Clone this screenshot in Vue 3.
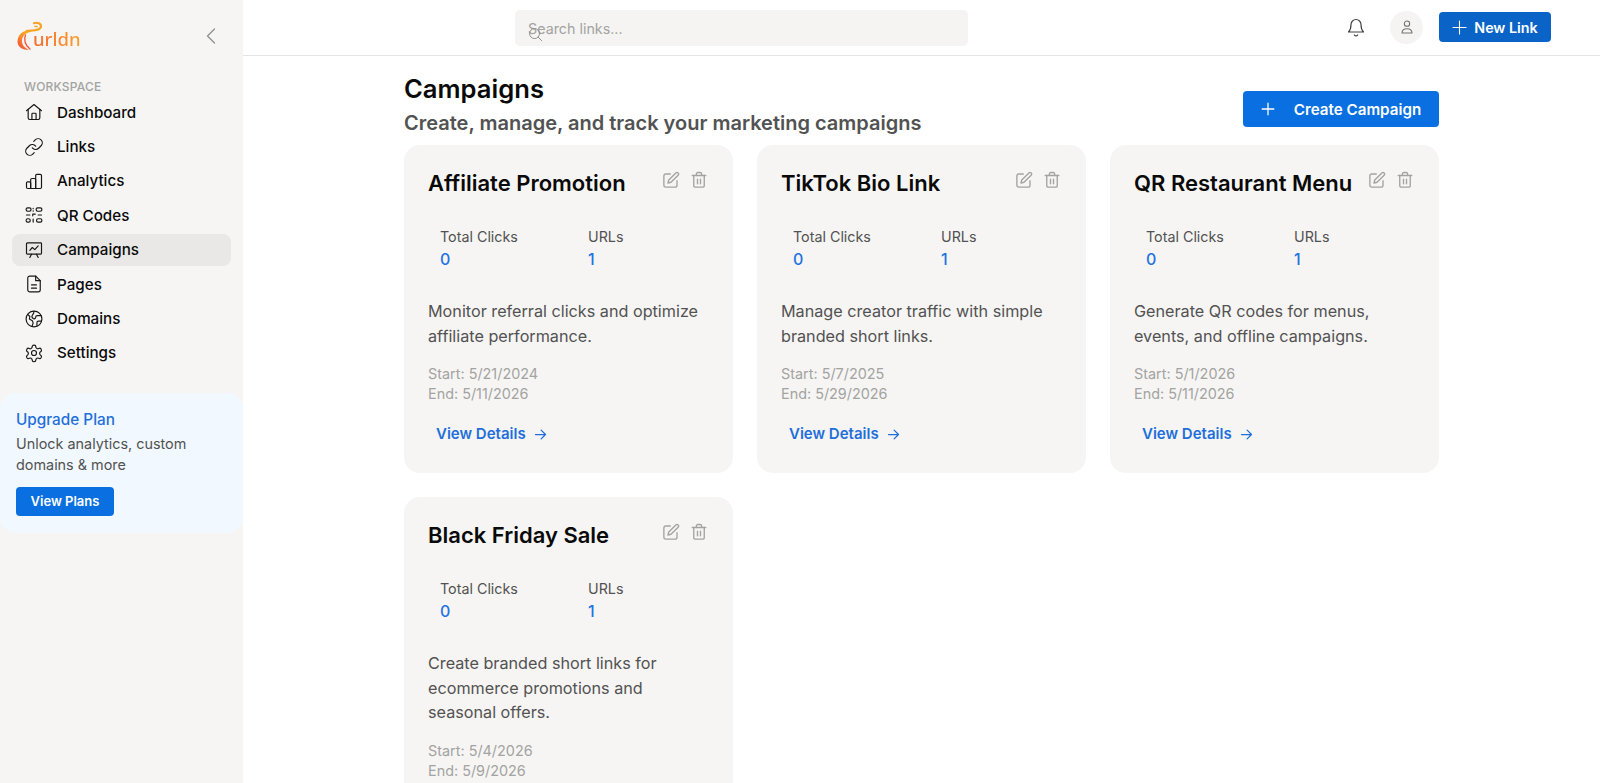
<script setup>
const nav = [
  { label: 'Dashboard', paths: ['M3 10.5 12 3l9 7.5', 'M5 8.8V19a2 2 0 0 0 2 2h10a2 2 0 0 0 2-2V8.8', 'M9.5 21v-6.5a1 1 0 0 1 1-1h3a1 1 0 0 1 1 1V21'] },
  { label: 'Links', paths: ['M10 13a5 5 0 0 0 7.54.54l3-3a5 5 0 0 0-7.07-7.07l-1.72 1.71', 'M14 11a5 5 0 0 0-7.54-.54l-3 3a5 5 0 0 0 7.07 7.07l1.71-1.71'] },
  { label: 'Analytics', paths: ['M3 14.5a1.5 1.5 0 0 1 1.5-1.5h2A1.5 1.5 0 0 1 8 14.5V21H4.5A1.5 1.5 0 0 1 3 19.5z', 'M8 10.5A1.5 1.5 0 0 1 9.5 9h3a1.5 1.5 0 0 1 1.5 1.5V21H8z', 'M14 5.5A1.5 1.5 0 0 1 15.5 4h4A1.5 1.5 0 0 1 21 5.5v14a1.5 1.5 0 0 1-1.5 1.5H14z'] },
  { label: 'QR Codes', paths: ['M4.5 3.5h2a1.5 1.5 0 0 1 0 4h-2a1.5 1.5 0 0 1 0-4z', 'M16.5 3.5h3a1.5 1.5 0 0 1 0 4h-3a1.5 1.5 0 0 1 0-4z', 'M4.5 16.5h1a1.5 1.5 0 0 1 0 4h-1a1.5 1.5 0 0 1 0-4z', 'M17 16.5h2.5a1.5 1.5 0 0 1 0 4H17a1.5 1.5 0 0 1 0-4z', 'M11 4v.5M11 7v.5M3 12h4M10.5 11h3M10.5 11v2M17 12h4M11 17v3.5'] },
  { label: 'Campaigns', active: true, paths: ['M4 3.5h16a1 1 0 0 1 1 1V16a1 1 0 0 1-1 1H4a1 1 0 0 1-1-1V4.5a1 1 0 0 1 1-1z', 'M7 12.5l3-3.5 3 2.5 4-4.5', 'M7 21l2-4M17 21l-2-4'] },
  { label: 'Pages', paths: ['M14 2.5H7A2.5 2.5 0 0 0 4.5 5v14A2.5 2.5 0 0 0 7 21.5h10a2.5 2.5 0 0 0 2.5-2.5V8z', 'M14 2.5V8h5.5', 'M9 13h6M9 17h6'] },
  { label: 'Domains', paths: ['M12 2.5a9.5 9.5 0 1 0 0 19 9.5 9.5 0 0 0 0-19z', 'M4.5 6.5 7 9l-.5 3 3.5 2 1 3-1.5 4', 'M20.5 8H16a2 2 0 0 0-2 2 2 2 0 0 1-3 1.5c-1.5-1-2-2.5-1-4 .8-1.2 2-2 2-4.8', 'M21 14.5h-3.5a2 2 0 0 0-2 2v3.5'] },
  { label: 'Settings', paths: ['M12.2 2.5h-.4a2 2 0 0 0-2 2v.2a2 2 0 0 1-1 1.7l-.4.3a2 2 0 0 1-2 0l-.2-.1a2 2 0 0 0-2.7.7l-.2.4a2 2 0 0 0 .7 2.7l.2.1a2 2 0 0 1 1 1.7v.6a2 2 0 0 1-1 1.7l-.2.1a2 2 0 0 0-.7 2.7l.2.4a2 2 0 0 0 2.7.7l.2-.1a2 2 0 0 1 2 0l.4.3a2 2 0 0 1 1 1.7v.2a2 2 0 0 0 2 2h.4a2 2 0 0 0 2-2v-.2a2 2 0 0 1 1-1.7l.4-.3a2 2 0 0 1 2 0l.2.1a2 2 0 0 0 2.7-.7l.2-.4a2 2 0 0 0-.7-2.7l-.2-.1a2 2 0 0 1-1-1.7v-.6a2 2 0 0 1 1-1.7l.2-.1a2 2 0 0 0 .7-2.7l-.2-.4a2 2 0 0 0-2.7-.7l-.2.1a2 2 0 0 1-2 0l-.4-.3a2 2 0 0 1-1-1.7v-.2a2 2 0 0 0-2-2z', 'M12 9a3 3 0 1 0 0 6 3 3 0 0 0 0-6z'] }
]
const campaigns = [
  { title: 'Affiliate Promotion', text: 'Monitor referral clicks and optimize affiliate performance.', start: '5/21/2024', end: '5/11/2026' },
  { title: 'TikTok Bio Link', text: 'Manage creator traffic with simple branded short links.', start: '5/7/2025', end: '5/29/2026' },
  { title: 'QR Restaurant Menu', text: 'Generate QR codes for menus, events, and offline campaigns.', start: '5/1/2026', end: '5/11/2026' },
  { title: 'Black Friday Sale', text: 'Create branded short links for ecommerce promotions and seasonal offers.', start: '5/4/2026', end: '5/9/2026' }
]
</script>

<template>
  <div class="app">
    <aside class="sidebar">
      <div class="brand">
        <div class="logo">
          <svg class="logo-mark" viewBox="0 0 28 32" width="28" height="32" fill="none" aria-hidden="true">
            <defs>
              <linearGradient id="lg" x1="0" y1="1" x2="0.7" y2="0">
                <stop offset="0" stop-color="#f0443c" />
                <stop offset="0.55" stop-color="#f98a2c" />
                <stop offset="1" stop-color="#fbb21f" />
              </linearGradient>
            </defs>
            <path d="M14 10C7 10 1.500 15 1.500 21.500 1.500 26.500 6 30 13.500 30 8.500 28 6 25 6 21c0-5 4-8.500 9-9z" fill="url(#lg)" />
            <path d="M9.500 15C7.800 19 8.500 25 14 29" stroke="#f4533a" stroke-width="1.300" stroke-linecap="round" />
            <path d="M11 10.800c6-.6 13.500.2 14-4.300.3-3-4-4.500-7-3.300" stroke="#f9a325" stroke-width="2.200" stroke-linecap="round" />
            <path d="M19 6.500h2" stroke="#f9a325" stroke-width="1.500" stroke-linecap="round" />
          </svg>
          <span class="logo-text">urldn</span>
        </div>
        <svg class="collapse" viewBox="0 0 12 20" width="12" height="20" fill="none" stroke="#8f8f8d" stroke-width="1.300" stroke-linecap="round" stroke-linejoin="round" aria-hidden="true">
          <path d="M9.500 3 2.500 10l7 7" />
        </svg>
      </div>
      <div class="section-label">WORKSPACE</div>
      <nav class="nav">
        <div v-for="item in nav" :key="item.label" class="nav-item" :class="{ active: item.active }">
          <svg viewBox="0 0 24 24" width="20" height="20" fill="none" stroke="#171717" stroke-width="1.400" stroke-linecap="round" stroke-linejoin="round" aria-hidden="true">
            <path v-for="d in item.paths" :key="d" :d="d" />
          </svg>
          <span>{{ item.label }}</span>
        </div>
      </nav>
      <div class="upgrade">
        <div class="upgrade-title">Upgrade Plan</div>
        <p class="upgrade-text">Unlock analytics, custom domains &amp; more</p>
        <button class="plans-btn">View Plans</button>
      </div>
    </aside>

    <div class="main">
      <header class="topbar">
        <div class="search">
          <span class="search-text">Search links...</span>
          <svg class="search-icon" viewBox="0 0 24 24" width="15" height="15" fill="none" stroke="#8a8a88" stroke-width="1.500" stroke-linecap="round" aria-hidden="true">
            <circle cx="10.500" cy="10.500" r="8" />
            <path d="m16.500 16.500 5.500 5.500" />
          </svg>
        </div>
        <div class="top-actions">
          <svg class="bell" viewBox="0 0 24 24" width="20" height="20" fill="none" stroke="#404040" stroke-width="1.400" stroke-linecap="round" stroke-linejoin="round" aria-hidden="true">
            <path d="M6 9a6 6 0 0 1 12 0c0 5 1 7 3 9H3c2-2 3-4 3-9z" />
            <path d="M10 21.500a2.300 2.300 0 0 0 4 0" />
          </svg>
          <div class="avatar">
            <svg viewBox="0 0 24 24" width="16" height="16" fill="none" stroke="#737373" stroke-width="1.600" stroke-linecap="round" stroke-linejoin="round" aria-hidden="true">
              <circle cx="12" cy="7" r="4" />
              <path d="M4.500 21c0-4 3-6.500 7.500-6.500s7.500 2.500 7.500 6.500z" />
            </svg>
          </div>
          <button class="new-btn">
            <svg viewBox="0 0 24 24" width="15" height="15" fill="none" stroke="#fff" stroke-width="1.700" stroke-linecap="round" aria-hidden="true">
              <path d="M12 1.500v21M1.500 12h21" />
            </svg>
            New Link
          </button>
        </div>
      </header>

      <main class="content">
        <div class="page-head">
          <div>
            <h1>Campaigns</h1>
            <p class="subtitle">Create, manage, and track your marketing campaigns</p>
          </div>
          <button class="create-btn">
            <svg viewBox="0 0 24 24" width="14" height="14" fill="none" stroke="#fff" stroke-width="2.200" stroke-linecap="round" aria-hidden="true">
              <path d="M12 2v20M2 12h20" />
            </svg>
            Create Campaign
          </button>
        </div>
        <div class="grid">
          <article v-for="c in campaigns" :key="c.title" class="card">
            <div class="card-head">
              <h2>{{ c.title }}</h2>
              <div class="card-icons">
                <svg viewBox="0 0 24 24" width="18" height="18" fill="none" stroke="#a3a3a1" stroke-width="1.800" stroke-linecap="round" stroke-linejoin="round" aria-hidden="true">
                  <path d="M11 4H5a2.500 2.500 0 0 0-2.500 2.500V19A2.500 2.500 0 0 0 5 21.500h12.500A2.500 2.500 0 0 0 20 19v-6" />
                  <path d="M18.500 2.600a2.100 2.100 0 0 1 3 3L12 15l-4 1 1-4z" />
                </svg>
                <svg viewBox="0 0 24 24" width="18" height="18" fill="none" stroke="#a3a3a1" stroke-width="1.800" stroke-linecap="round" stroke-linejoin="round" aria-hidden="true">
                  <path d="M3 6h18" />
                  <path d="M19 6v13.500a2 2 0 0 1-2 2H7a2 2 0 0 1-2-2V6" />
                  <path d="M8.500 6V4a2 2 0 0 1 2-2h3a2 2 0 0 1 2 2v2" />
                  <path d="M10 11v6M14 11v6" />
                </svg>
              </div>
            </div>
            <div class="stats">
              <div>
                <div class="stat-label">Total Clicks</div>
                <div class="stat-value">0</div>
              </div>
              <div>
                <div class="stat-label">URLs</div>
                <div class="stat-value">1</div>
              </div>
            </div>
            <p class="desc">{{ c.text }}</p>
            <div class="dates">
              <div>Start: {{ c.start }}</div>
              <div>End: {{ c.end }}</div>
            </div>
            <a class="details">
              View Details
              <svg viewBox="0 0 24 24" width="15" height="15" fill="none" stroke="#1f6fdb" stroke-width="2" stroke-linecap="round" stroke-linejoin="round" aria-hidden="true">
                <path d="M4 12h16M13 5l7 7-7 7" />
              </svg>
            </a>
          </article>
        </div>
      </main>
    </div>
  </div>
</template>

<style>
html, body { margin: 0; background: #fff; }
</style>

<style scoped>
.app {
  display: flex;
  height: 783px;
  overflow: hidden;
  font-family: Inter, "Noto Sans", sans-serif;
  color: #0a0a0a;
}
.sidebar {
  width: 243px;
  flex: none;
  background: #f6f5f4;
  display: flex;
  flex-direction: column;
}
.brand {
  height: 72px;
  padding: 0 26px 0 16px;
  display: flex;
  align-items: center;
  justify-content: space-between;
}
.logo {
  display: flex;
  align-items: flex-end;
  height: 32px;
}
.logo-mark { margin-right: -11px; }
.logo-text {
  font-family: "Noto Sans", sans-serif;
  font-size: 18.500px;
  line-height: 22px;
  font-weight: 500;
  margin-bottom: 2px;
  background: linear-gradient(90deg, #f7682f, #f9a02b);
  -webkit-background-clip: text;
  background-clip: text;
  color: transparent;
}
.section-label {
  margin: 7px 0 0 24px;
  font-size: 12px;
  line-height: 15px;
  font-weight: 500;
  letter-spacing: 0.2px;
  color: #a3a3a1;
}
.nav {
  margin: 2px 12px 0;
  width: 219px;
  display: flex;
  flex-direction: column;
  gap: 2px;
}
.nav-item {
  height: 32.4px;
  display: flex;
  align-items: center;
  gap: 13px;
  padding-left: 12px;
  border-radius: 8px;
  font-size: 15.2px;
  font-weight: 500;
  color: #0a0a0a;
}
.nav-item.active { background: #e9e8e6; }
.upgrade {
  margin-top: 24px;
  height: 140px;
  box-sizing: border-box;
  padding: 17px 16px 16px;
  background: #f1f8ff;
  border-radius: 16px;
}
.upgrade-title {
  font-size: 15.3px;
  line-height: 20px;
  font-weight: 500;
  color: #1f6fdb;
}
.upgrade-text {
  margin: 4px 0 0;
  font-size: 14.4px;
  line-height: 20.4px;
  color: #525252;
}
.plans-btn {
  margin-top: 12px;
  width: 98px;
  height: 29px;
  border: 0;
  border-radius: 4px;
  background: #0a6fe0;
  color: #fff;
  font: 600 13px Inter, sans-serif;
}
.main {
  flex: 1;
  min-width: 0;
  display: flex;
  flex-direction: column;
}
.topbar {
  height: 56px;
  box-sizing: border-box;
  flex: none;
  border-bottom: 1px solid #e5e5e5;
  display: flex;
  padding-right: 49px;
  padding-left: 272px;
  justify-content: space-between;
  align-items: flex-start;
}
.search {
  position: relative;
  margin-top: 10px;
  width: 453px;
  height: 36px;
  border-radius: 5px;
  background: #f5f4f3;
  display: flex;
  align-items: center;
  padding-left: 13px;
  box-sizing: border-box;
}
.search-text {
  font-size: 14.3px;
  color: #a3a3a1;
}
.search-icon {
  position: absolute;
  left: 13px;
  top: 17px;
}
.top-actions {
  display: flex;
  align-items: center;
  height: 56px;
  margin-top: -1px;
}
.bell { margin-right: 24px; }
.avatar {
  width: 33px;
  height: 33px;
  border-radius: 50%;
  background: #f5f4f3;
  display: flex;
  align-items: center;
  justify-content: center;
  margin-right: 16px;
}
.new-btn {
  width: 112px;
  height: 30px;
  border: 0;
  border-radius: 4px;
  background: #0a64c8;
  color: #fff;
  font: 600 14.3px Inter, sans-serif;
  display: flex;
  align-items: center;
  justify-content: center;
  gap: 7px;
}
.content {
  width: 1035px;
  align-self: center;
  flex: none;
}
.page-head {
  display: flex;
  justify-content: space-between;
  align-items: flex-start;
  height: 89px;
}
h1 {
  margin: 17px 0 0;
  font-size: 25.6px;
  line-height: 32px;
  font-weight: 600;
}
.subtitle {
  margin: 2.5px 0 0;
  font-size: 20px;
  line-height: 30px;
  font-weight: 600;
  color: #525252;
}
.create-btn {
  width: 196px;
  height: 36px;
  margin-top: 35px;
  border: 0;
  border-radius: 4px;
  background: #0a6fe0;
  color: #fff;
  font: 600 15.2px Inter, sans-serif;
  display: flex;
  align-items: center;
  justify-content: center;
  gap: 19px;
}
.grid {
  display: grid;
  grid-template-columns: repeat(3, 329px);
  column-gap: 24px;
  row-gap: 24px;
  align-items: start;
}
.card {
  background: #f6f5f4;
  border-radius: 16px;
  padding: 24px;
  box-sizing: border-box;
  min-height: 328px;
}
.card-head {
  display: flex;
  justify-content: space-between;
  align-items: flex-start;
  height: 33px;
}
h2 {
  margin: 0;
  font-size: 22px;
  line-height: 28px;
  font-weight: 600;
  white-space: nowrap;
}
.card-icons {
  display: flex;
  gap: 10px;
  margin-top: 2px;
  margin-right: 1px;
}
.stats {
  display: grid;
  grid-template-columns: 148px 1fr;
  padding-left: 12px;
  margin-top: 24px;
}
.stat-label {
  font-size: 14.3px;
  line-height: 22px;
  color: #525252;
}
.stat-value {
  font-size: 16px;
  line-height: 22px;
  font-weight: 500;
  color: #2272e0;
}
.desc {
  margin: 29px 0 0;
  font-size: 16.2px;
  line-height: 24.5px;
  color: #525252;
}
.dates {
  margin-top: 16px;
  font-size: 14.4px;
  line-height: 20px;
  color: #a3a3a1;
}
.details {
  margin: 20px 0 0 8px;
  display: flex;
  align-items: center;
  gap: 7px;
  font-size: 15px;
  line-height: 20px;
  font-weight: 600;
  color: #1f6fdb;
}
</style>
